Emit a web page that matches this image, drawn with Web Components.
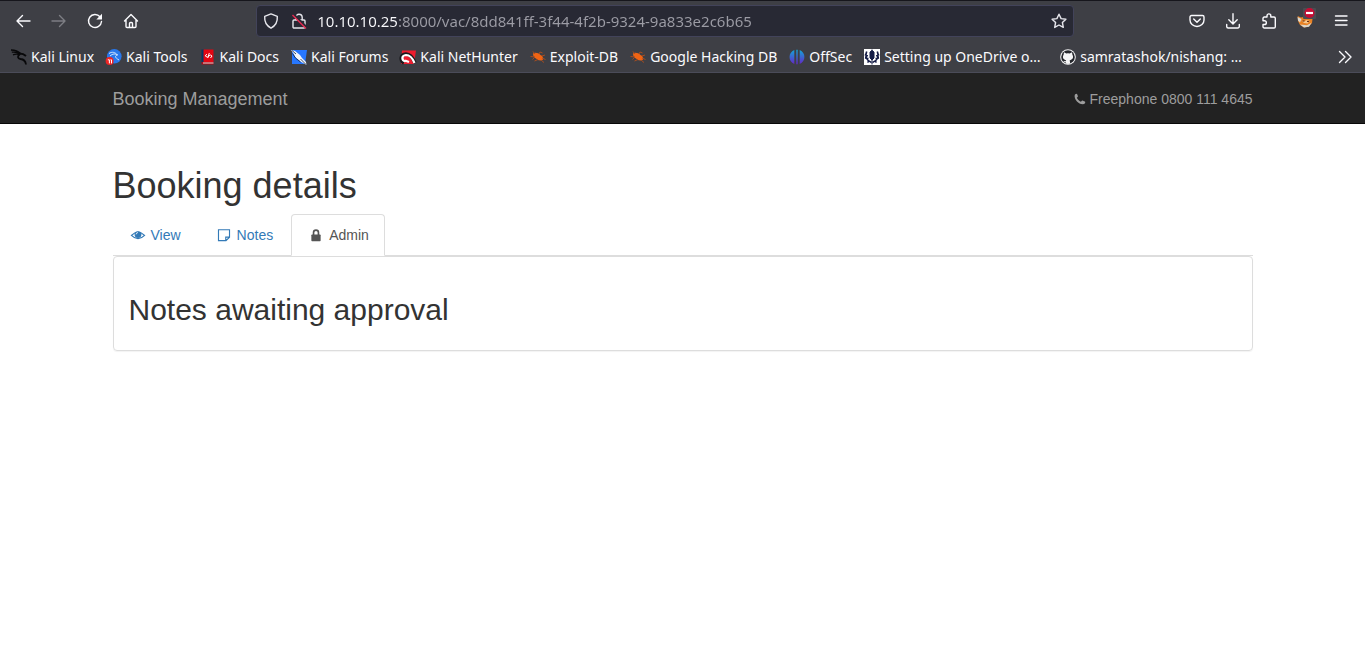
<!DOCTYPE html>
<html lang="en">
<head>
<meta charset="utf-8">
<title>Booking Management</title>
<style>
body { margin: 0; background: #fff; font: 14px/20px "Liberation Sans", Arial, sans-serif; color: #333; }
</style>
</head>
<body>
<browser-chrome></browser-chrome>
<site-navbar></site-navbar>
<booking-page>
  <tab-link slot="tabs" icon="eye">View</tab-link>
  <tab-link slot="tabs" icon="note">Notes</tab-link>
  <tab-link slot="tabs" icon="lock" active>Admin</tab-link>
  <content-panel>Notes awaiting approval</content-panel>
</booking-page>
<script>
const ICONS = {
  back: '<path d="M15 8H2M7.500 2.500 2 8l5.500 5.500" class="s"/>',
  forward: '<path d="M1 8h13M8.500 2.500 14 8l-5.500 5.500" class="s"/>',
  reload: '<path d="M13 3.800A6.500 6.500 0 1 0 14.500 8.500" class="s"/><path d="M15 .8v5.700H9.300z" fill="currentColor"/>',
  home: '<path d="M1.500 8 8 1.500 14.500 8M3 7v6.500a1 1 0 0 0 1 1h8a1 1 0 0 0 1-1V7M6.500 14.500v-4a1 1 0 0 1 1-1h1a1 1 0 0 1 1 1v4" class="s"/>',
  shield: '<path d="M8 .9 14.300 3.300c.4 5-1.300 9.200-6.300 11.900C3 12.500 1.300 8.300 1.700 3.300z" class="s"/>',
  insecure: '<path d="M4.800 7V4.500a3.200 3.200 0 0 1 6.400 0V7M3 7h10a1 1 0 0 1 1 1v6a1 1 0 0 1-1 1H3a1 1 0 0 1-1-1V8a1 1 0 0 1 1-1z" class="s"/><path d="M3 1.500 15.500 14" stroke="#282934" stroke-width="2"/><path d="M1.500 2 15 15.500" stroke="#e22850" stroke-width="1.500"/>',
  star: '<path d="m8 1.200 2.100 4.400 4.800.6-3.500 3.300.9 4.900L8 12l-4.300 2.400.9-4.900L1.100 6.200l4.800-.6z" class="s"/>',
  pocket: '<path d="M2.500 2.500h11a1.500 1.500 0 0 1 1.500 1.500v3a7 6.500 0 0 1-14 0V4a1.500 1.500 0 0 1 1.500-1.500zM4.700 6 8 9.200 11.300 6" class="s"/>',
  download: '<path d="M8 .8v10M3.800 6.800 8 11l4.200-4.200M1.700 11.500v2a1.500 1.500 0 0 0 1.500 1.500h9.600a1.500 1.500 0 0 0 1.500-1.500v-2" class="s"/>',
  puzzle: '<path d="M6 4V2.800a1.900 1.900 0 0 1 3.800 0V4H13a1.300 1.300 0 0 1 1.300 1.300v8.400A1.300 1.300 0 0 1 13 15H3.300A1.300 1.300 0 0 1 2 13.700V11.500h1.500a1.800 1.800 0 0 0 0-3.700H2V5.300A1.300 1.300 0 0 1 3.300 4z" class="s"/>',
  fox: '<path d="M.7 3 4 4.500l4-1 5 1 2.500 1.500-.5 4-3 3.500-5 1-4-2.500-2-4z" fill="#e98224"/><path d="M.5 4 4.500 6 3 9.500 1 7.500zM3 11.500l4 3 5-.7 2.500-4-4.500 2.500z" fill="#d9d6cc"/><path d="m4 7 3 1.500L9.500 7l3 1-2 2.500L7 10z" fill="#f8c78b"/><path d="M5.500 8h2M10 8.500h2" stroke="#673219"/><rect x="6" y="-5" width="13" height="11" rx="1" fill="#4b4c51"/><circle cx="12.500" cy="0" r="5" fill="#c50d34"/><path d="M9 0h7" stroke="#fff" stroke-width="2.200"/>',
  menu: '<path d="M2.500 3h11.500M2.500 7.500h11.500M2.500 12h11.500" class="s"/>',
  more: '<path d="m2.500 2.500 5.500 5.500-5.500 5.500M8.500 2.500 14 8l-5.500 5.500" class="s"/>',
  kali: '<path d="M0 1c4 .2 7 1 9.500 3.500M.8 3.200C4 2.800 7 3.500 9 5M2 5.800c2.500-1 5-1 7 .2" fill="none" stroke="#08080a" stroke-width="1.300"/><path d="M8.500 4.500C11 4.500 13 5 15 7M9 5c-3 2-2.500 4.500.5 5 3 .3 5 1.500 5.500 5.500" fill="none" stroke="#08080a" stroke-width="1.800"/>',
  tools: '<circle cx="8.300" cy="7.300" r="7.300" fill="#2878ec"/><path d="M3 4.500c3-2 6-1.500 8.500 1.500M4 7c3-2.500 5-2.500 7.500-1C8 7 9.500 9 13 11" fill="none" stroke="#d4e7ff"/><circle cx="3.600" cy="12" r="4" fill="#ed2525"/><path d="M1.800 10.800h1.600v3.600M4.500 10.800h1v3.600" fill="none" stroke="#fff"/>',
  docs: '<path d="M1.500.5h2.500v14H1.500z" fill="#063763"/><path d="M3.500.5H13.500v12.500H3.500z" fill="#e30613"/><path d="M1.500 13h12v2.500h-12z" fill="#a80d16"/><path d="M3 14h10.500" stroke="#e7d7d7"/><path d="M6.800 5 5.300 7l2 1.200 3-2.200 1.700 1-1.500 2M9.300 4l-1.500 5" fill="none" stroke="#fff"/>',
  forums: '<path d="M1 1h15l-2 14H1z" fill="#2777ff"/><path d="M0 1 4 2l5 4 2 3 4 4 .5 3-6-3.500-5-4-2-4z" fill="#f3f6fb"/><path d="M1 1.500 5 5M9.500 10l5.500 5.500M1.500 4.500 4.500 9l5 4" fill="none" stroke="#10213b" stroke-width=".8"/>',
  nethunter: '<path d="M2 1.500h14l-2 13.500H1z" fill="#ed1c2e"/><path d="M4 14C-.5 11 .5 5.500 6 5c4 0 7 4 9 9" fill="none" stroke="#19191c" stroke-width="3.500"/><path d="M5.500 12.500C1 11 1.500 6.500 6 6c3.500 0 6.500 3 8.500 8M5 11.500l4 1.500" fill="none" stroke="#fff" stroke-width="2.200"/>',
  exploit: '<path d="M3 4.500c2-1.500 5.500-.8 7.500 1.500 2.500 1 3.500 3.500 2 5-2.500 1-5 .2-6.500-1.500C4 9 3 7 3 4.500z" fill="#f06414"/><path d="M.5 7.500 5 8l-2.500 2.500M5 5 3 2.500M9 5l1-2 2.500 1M12 7l3-1M12 9l3.500 1.500M11 11l3 2.500M8 10.500 4.500 12" fill="none" stroke="#a64d20"/>',
  offsec: '<defs><linearGradient id="g" x2="0" y2="1"><stop stop-color="#12a6d8"/><stop offset="1" stop-color="#6426c7"/></linearGradient></defs><path d="M5.300 1v14C-1 12.500-1 3.500 5.300 1zM7.300.8h1.400v14.400H7.300zM10.700 1c6.300 2.500 6.300 11.500 0 14z" fill="url(#g)"/>',
  wreath: '<path d="M0 0h16v16H0z" fill="#fff"/><path d="M8 .5v15M6 3l2-1.500L10 3v6l-2 2-2-2z" fill="#151c46" stroke="#151c46"/><path d="M2.700 2.500C.5 8 3 12 7.500 13.500M13.300 2.500C15.500 8 13 12 8.500 13.500M.8 5.500l3 1.500M1 9l3.500.5M15.200 5.500l-3 1.500M15 9l-3.500.5M3.500 13.500l2-2M12.500 13.500l-2-2" fill="none" stroke="#151c46" stroke-width="1.600"/>',
  github: '<circle cx="8" cy="8" r="7.800" fill="#f5f5f6"/><circle cx="8" cy="8" r="6.800" fill="#24262b"/><path d="M4 3.300 6.300 4.400a7 7 0 0 1 3.400 0L12 3.300l.4 2.500c1.700 3-.1 5-2.700 5.400l.5 3.400a7 7 0 0 1-4.400 0v-1.400c-1.500.3-2-.5-2.700-1.500 1 .1 1.300.8 2.500.6l.6-1.100C3.600 10.800 2 8.800 3.600 5.800z" fill="#f5f5f6"/>',
  phone: '<path d="M15 12c0 1.300-.6 2.800-3.300 3C5.500 14.500 1 9 .8 4.200c0-2.100 1.300-3.200 2.700-3.200.6 0 1.200 1.900 1.700 3.200.2.800-1.600 1.600-1.400 2.200.9 2.200 3 4.300 5.300 5.200.6.200 1.400-1.700 2.100-1.500.8.300 3.800 1.400 3.800 1.900z" fill="currentColor"/>',
  eye: '<path d="M.5 8.500Q8 .8 15.500 8.500 8 16 .5 8.500z" fill="none" stroke="currentColor" stroke-width="1.400"/><circle cx="8" cy="7.500" r="3.900" fill="currentColor"/><path d="M5.800 7.300A2.200 2.200 0 0 1 8 5.200" fill="none" stroke="#fff" stroke-width=".9"/>',
  note: '<path d="M1.700 2h12.600v8.500l-4 4H1.700zM10 14.500v-4h4.300" fill="none" stroke="currentColor" stroke-width="1.300"/>',
  lock: '<path d="M5.200 8V5.200a2.800 2.800 0 0 1 5.600 0V8" fill="none" stroke="currentColor" stroke-width="1.900"/><rect x="2.700" y="7.500" width="10.600" height="7.500" rx=".8" fill="currentColor"/>'
};
const icon = name => `<svg viewBox="0 0 16 16" aria-hidden="true">${ICONS[name]}</svg>`;
const BASE = `<style>
  *, :host { box-sizing: border-box; }
  svg { display: block; width: 16px; height: 16px; flex: none; overflow: visible; }
  .s { fill: none; stroke: currentColor; stroke-width: 1.4; stroke-linecap: round; stroke-linejoin: round; }
</style>`;
const define = (name, render) => customElements.define(name, class extends HTMLElement {
  connectedCallback() {
    if (!this.shadowRoot) this.attachShadow({ mode: 'open' }).innerHTML = BASE + render(this);
  }
});

define('tool-button', el => `<style>
  :host { display: block; color: #fbfbfe; }
  :host([dim]) { color: #7d7e84; }
  button { display: grid; place-items: center; width: 36px; height: 32px; padding: 0; border: 0; background: none; color: inherit; }
</style><button type="button" aria-label="${el.getAttribute('label')}">${icon(el.getAttribute('icon'))}</button>`);

define('bookmark-link', el => `<style>
  :host { display: block; flex: none; }
  :host([long]) { min-width: 184px; }
  a { display: flex; align-items: center; gap: 4px; color: #fbfbfe; text-decoration: none; white-space: nowrap; }
</style><a href="#">${icon(el.getAttribute('icon'))}<span><slot></slot></span></a>`);

define('address-bar', () => `<style>
  :host { display: flex; align-items: center; height: 32px; padding: 0 6px; border: 1px solid #42435a; border-radius: 4px; background: #282934; color: #e6e6ec; }
  .lead { display: flex; gap: 12px; margin-right: 10px; }
  input { flex: 1; min-width: 0; height: 24px; padding: 0; border: 0; outline: 0; font: inherit;
    background: linear-gradient(90deg, #fbfbfe 80px, #9c9ca5 80px); -webkit-background-clip: text; background-clip: text; color: transparent; }
  button { padding: 0; border: 0; background: none; color: inherit; }
</style><div class="lead">${icon('shield')}${icon('insecure')}</div>
<input type="text" aria-label="Address" value="10.10.10.25:8000/vac/8dd841ff-3f44-4f2b-9324-9a833e2c6b65">
<button type="button" aria-label="Bookmark this page">${icon('star')}</button>`);

define('browser-chrome', () => `<style>
  :host { display: block; background: #3e3f45; border-top: 1px solid #16161c; border-bottom: 1px solid #4b4c59; font: 15px/20px "Noto Sans", sans-serif; }
  .bar { display: grid; grid-template-columns: 15fr minmax(200px, 818px) 17fr; align-items: center; height: 40px; padding: 0 6px 0 5px; }
  .group { display: flex; }
  .right { justify-content: flex-end; }
  nav { display: flex; align-items: center; gap: 12px; height: 31px; padding: 0 12px 0 11px; font-size: 14px; }
  .more { margin-left: auto; padding: 0; border: 0; background: none; color: #fbfbfe; }
</style>
<div class="bar">
  <div class="group">
    <tool-button icon="back" label="Back"></tool-button>
    <tool-button icon="forward" label="Forward" dim></tool-button>
    <tool-button icon="reload" label="Reload"></tool-button>
    <tool-button icon="home" label="Home"></tool-button>
  </div>
  <address-bar></address-bar>
  <div class="group right">
    <tool-button icon="pocket" label="Save to Pocket"></tool-button>
    <tool-button icon="download" label="Downloads"></tool-button>
    <tool-button icon="puzzle" label="Extensions"></tool-button>
    <tool-button icon="fox" label="Proxy disabled"></tool-button>
    <tool-button icon="menu" label="Menu"></tool-button>
  </div>
</div>
<nav aria-label="Bookmarks">
  <bookmark-link icon="kali">Kali Linux</bookmark-link>
  <bookmark-link icon="tools">Kali Tools</bookmark-link>
  <bookmark-link icon="docs">Kali Docs</bookmark-link>
  <bookmark-link icon="forums">Kali Forums</bookmark-link>
  <bookmark-link icon="nethunter">Kali NetHunter</bookmark-link>
  <bookmark-link icon="exploit">Exploit-DB</bookmark-link>
  <bookmark-link icon="exploit">Google Hacking DB</bookmark-link>
  <bookmark-link icon="offsec">OffSec</bookmark-link>
  <bookmark-link icon="wreath" long>Setting up OneDrive o…</bookmark-link>
  <bookmark-link icon="github" long>samratashok/nishang: …</bookmark-link>
  <button class="more" type="button" aria-label="More bookmarks">${icon('more')}</button>
</nav>`);

define('site-navbar', () => `<style>
  :host { display: block; background: #222; border-bottom: 1px solid #080808; color: #9d9d9d; }
  div { display: flex; align-items: center; justify-content: space-between; max-width: 1170px; height: 50px; margin: 0 auto; padding: 2px 15px 0; }
  a { color: inherit; text-decoration: none; }
  .brand { font-size: 18px; }
  .phone { display: flex; align-items: center; gap: 4px; }
  .phone svg { width: 12px; height: 12px; }
</style><div><a class="brand" href="#">Booking Management</a><a class="phone" href="tel:08001114645">${icon('phone')}Freephone 0800 111 4645</a></div>`);

define('tab-link', el => `<style>
  :host { display: block; margin: 0 2px -1px 0; color: #337ab7; }
  a { display: flex; align-items: center; gap: 4px; height: 42px; padding: 0 15px; border: 1px solid transparent; border-radius: 4px 4px 0 0; color: inherit; text-decoration: none; }
  svg { width: 18px; height: 14px; }
  :host([active]) { color: #555; }
  :host([active]) a { background: #fff; border-color: #ddd #ddd #fff; }
</style><a href="#">${icon(el.getAttribute('icon'))}<span><slot></slot></span></a>`);

define('content-panel', () => `<style>
  :host { display: block; padding: 15px; border: 1px solid #ddd; border-radius: 4px; box-shadow: 0 1px 1px rgba(0,0,0,.05); }
  h2 { margin: 21px 0 9px; font-size: 30px; line-height: 33px; font-weight: 400; }
</style><h2><slot></slot></h2>`);

define('booking-page', () => `<style>
  :host { display: block; max-width: 1170px; margin: 0 auto; padding: 42px 15px 20px; }
  h1 { margin: 0 0 8px; font-size: 36px; line-height: 40px; font-weight: 400; }
  nav { display: flex; border-bottom: 1px solid #ddd; }
</style><h1>Booking details</h1><nav aria-label="Booking sections"><slot name="tabs"></slot></nav><slot></slot>`);
</script>
</body>
</html>
